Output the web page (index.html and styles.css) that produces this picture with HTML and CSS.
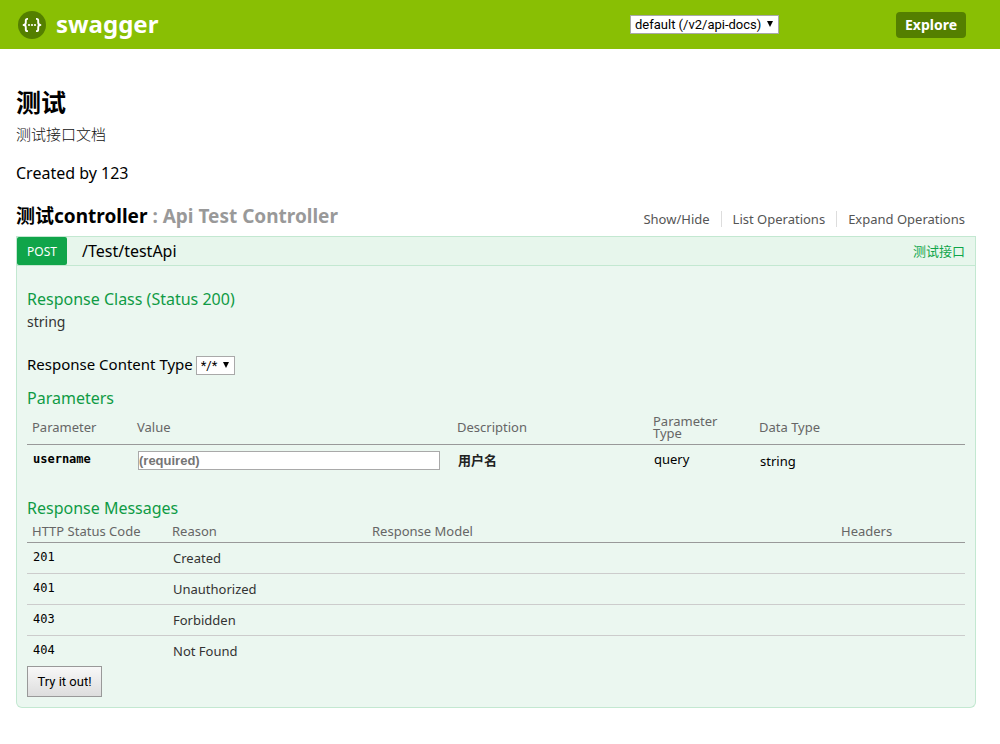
FILE: index.html
```html
<!DOCTYPE html>
<html lang="zh-CN">
<head>
<meta charset="utf-8">
<meta name="viewport" content="width=device-width, initial-scale=1">
<title>Swagger UI</title>
<link rel="stylesheet" href="styles.css">
</head>
<body>
<header class="topbar">
  <a class="logo" href="#">
    <svg class="logo-mark" viewBox="0 0 28 28" aria-hidden="true">
      <circle cx="14" cy="14" r="14" fill="#547f00"/>
      <g fill="none" stroke="#fff" stroke-width="1.9" stroke-linejoin="round">
        <path d="M10 7.9H9.4Q7.8 7.9 7.8 9.6v2Q7.8 14 5.6 14q2.2 0 2.2 2.4v2q0 1.7 1.6 1.7h.6"/>
        <path d="M18 7.9h.6q1.6 0 1.6 1.7v2q0 2.4 2.2 2.4-2.2 0-2.2 2.4v2q0 1.7-1.6 1.7h-.6"/>
      </g>
      <g fill="#fff"><circle cx="11" cy="14" r="1.1"/><circle cx="14" cy="14" r="1.1"/><circle cx="17" cy="14" r="1.1"/></g>
    </svg>
    <span class="logo-title">swagger</span>
  </a>
  <form class="api-selector">
    <span class="select api-select"><select aria-label="API"><option>default (/v2/api-docs)</option></select></span>
    <button class="explore" type="button">Explore</button>
  </form>
</header>

<main class="page">
  <h1 class="info-title">测试</h1>
  <p class="info-description">测试接口文档</p>
  <p class="info-author">Created by 123</p>

  <section class="resource">
    <div class="resource-head">
      <h2 class="resource-title"><a href="#">测试controller</a> : Api Test Controller</h2>
      <ul class="options">
        <li><a href="#">Show/Hide</a></li>
        <li><a href="#">List Operations</a></li>
        <li><a href="#">Expand Operations</a></li>
      </ul>
    </div>

    <article class="operation">
      <div class="operation-head">
        <a class="method" href="#">POST</a>
        <a class="path" href="#">/Test/testApi</a>
        <a class="summary" href="#">测试接口</a>
      </div>
      <form class="operation-body">
        <h4 class="section-title">Response Class (Status 200)</h4>
        <p class="model">string</p>

        <div class="content-type">
          <label for="content-type">Response Content Type</label>
          <span class="select type-select"><select id="content-type"><option>*/*</option></select></span>
        </div>

        <h4 class="section-title">Parameters</h4>
        <table class="grid params">
          <colgroup><col class="p-name"><col class="p-value"><col class="p-desc"><col class="p-type"><col></colgroup>
          <thead>
            <tr><th>Parameter</th><th>Value</th><th>Description</th><th>Parameter Type</th><th>Data Type</th></tr>
          </thead>
          <tbody>
            <tr>
              <td class="code required"><label for="username">username</label></td>
              <td class="field"><input id="username" class="value" type="text" placeholder="(required)"></td>
              <td class="description">用户名</td>
              <td class="kind">query</td>
              <td class="datatype">string</td>
            </tr>
          </tbody>
        </table>

        <h4 class="section-title">Response Messages</h4>
        <table class="grid messages">
          <colgroup><col class="m-code"><col class="m-reason"><col><col class="m-headers"></colgroup>
          <thead>
            <tr><th>HTTP Status Code</th><th>Reason</th><th>Response Model</th><th>Headers</th></tr>
          </thead>
          <tbody>
            <tr><td class="code">201</td><td>Created</td><td></td><td></td></tr>
            <tr><td class="code">401</td><td>Unauthorized</td><td></td><td></td></tr>
            <tr><td class="code">403</td><td>Forbidden</td><td></td><td></td></tr>
            <tr><td class="code">404</td><td>Not Found</td><td></td><td></td></tr>
          </tbody>
        </table>
        <button class="submit" type="button">Try it out!</button>
      </form>
    </article>
  </section>
</main>
</body>
</html>
```
FILE: styles.css
```css
* {
  box-sizing: border-box;
}

body {
  margin: 0;
  background: #fff;
  color: #000;
  font-family: "Noto Sans", "Noto Sans CJK SC", sans-serif;
  font-size: 14px;
}

h1, h2, h4, p, ul {
  margin: 0;
  padding: 0;
}

a {
  color: inherit;
  text-decoration: none;
}

/* Top bar */
.topbar {
  display: flex;
  align-items: center;
  justify-content: space-between;
  height: 49px;
  padding: 0 34px 0 18px;
  background: #89bf04;
}

.logo {
  display: flex;
  align-items: center;
  gap: 10px;
  color: #fff;
}

.logo-mark {
  width: 28px;
  height: 28px;
}

.logo-title {
  font-size: 24px;
  font-weight: 700;
  line-height: 26px;
  padding-bottom: 2px;
}

.api-selector {
  display: flex;
  align-items: center;
  gap: 117px;
}

.select {
  display: inline-block;
  position: relative;
}

.select::after {
  content: "";
  position: absolute;
  top: 6px;
  right: 6px;
  border: 3px solid transparent;
  border-top: 6px solid #000;
  border-bottom: 0;
  pointer-events: none;
}

.select select {
  display: block;
  appearance: none;
  width: 100%;
  height: 19px;
  margin: 0;
  padding: 0 4px;
  border: 1px solid #a9a9a9;
  border-radius: 0;
  background: #fff;
  color: #000;
  font: 13px Roboto, "Liberation Sans", sans-serif;
}

.api-select {
  width: 149px;
}

.type-select {
  width: 39px;
}

.explore {
  min-width: 70px;
  height: 26px;
  padding: 0 7px;
  border: 0;
  border-radius: 4px;
  background: #547f00;
  color: #fff;
  font: 700 14px "Noto Sans", sans-serif;
}

/* API info */
.page {
  padding: 37px 24px 36px 16px;
}

.info-title {
  font-size: 25px;
  line-height: 32px;
}

.info-description {
  margin-top: 6px;
  color: #111;
  font-size: 15px;
  font-weight: 300;
  line-height: 20px;
}

.info-author {
  margin-top: 19px;
  font-size: 16px;
  line-height: 20px;
}

/* Resource */
.resource {
  margin-top: 21px;
}

.resource-head {
  display: flex;
  justify-content: space-between;
  align-items: center;
  margin-bottom: 8px;
}

.resource-title {
  color: #999;
  font-size: 19px;
  line-height: 24px;
}

.resource-title a {
  color: #000;
}

.options {
  display: flex;
  padding-top: 6px;
  list-style: none;
  color: #555;
  font-size: 13px;
  line-height: 16px;
}

.options li {
  padding: 0 11px;
  border-left: 1px solid #ddd;
}

.options li:first-child {
  border-left: 0;
}

/* Operation */
.operation-head {
  display: flex;
  align-items: center;
  height: 30px;
  padding-right: 10px;
  border: 1px solid #c3e8d1;
  background: #e7f6ec;
}

.method {
  width: 50px;
  height: 28px;
  border-radius: 2px;
  background: #10a54a;
  color: #fff;
  font-size: 12px;
  line-height: 30px;
  text-align: center;
}

.path {
  flex: 1;
  padding-left: 15px;
  font-size: 16px;
}

.summary {
  padding-bottom: 2px;
  color: #10a54a;
  font-size: 13px;
}

.operation-body {
  padding: 21px 10px 10px;
  border: 1px solid #c3e8d1;
  border-top: 0;
  border-radius: 0 0 6px 6px;
  background: #ebf7f0;
}

.section-title {
  color: #0f9b45;
  font-size: 16px;
  font-weight: 400;
  line-height: 24px;
}

.model {
  margin-top: 1px;
  color: #333;
  line-height: 20px;
}

.content-type {
  display: flex;
  align-items: center;
  gap: 3px;
  height: 20px;
  margin: 23px 0 11px;
  font-size: 15px;
  line-height: 18px;
}

.content-type label {
  padding-bottom: 2px;
}

/* Tables */
.grid {
  width: 100%;
  border-collapse: separate;
  border-spacing: 0;
  table-layout: fixed;
  font-size: 13px;
}

.grid th {
  padding: 0 5px;
  border-bottom: 1px solid #999;
  color: #666;
  font-weight: 400;
  line-height: 12px;
  text-align: left;
}

.grid td {
  padding: 0 6px;
  vertical-align: top;
}

.grid .code {
  font-family: "DejaVu Sans Mono", monospace;
  font-size: 12px;
}

.p-name { width: 105px; }
.p-value { width: 320px; }
.p-desc { width: 196px; }
.p-type { width: 106px; }
.m-code { width: 140px; }
.m-reason { width: 200px; }
.m-headers { width: 129px; }

.params th {
  height: 35px;
}

.params td {
  height: 51px;
  padding-top: 5px;
  line-height: 18px;
}

.params .field {
  padding-top: 6px;
}

.params .required {
  font-weight: 700;
}

.params .description {
  padding-top: 6px;
  color: #222;
  font-weight: 600;
}

.params .datatype {
  padding-top: 7px;
}

.value {
  display: block;
  width: 302px;
  height: 19px;
  margin: 0;
  padding: 0;
  border: 1px solid #a9a9a9;
  background: #fff;
  font: 700 13px "Liberation Sans", sans-serif;
}

.value::placeholder {
  color: #757575;
  opacity: 1;
}

.messages th {
  height: 23px;
}

.messages td {
  height: 31px;
  padding-top: 6px;
  border-bottom: 1px solid #ccc;
  color: #333;
  line-height: 18px;
}

.messages tr:last-child td {
  height: 30px;
  border-bottom: 0;
}

.messages .code {
  padding-top: 5px;
  color: #000;
}

.submit {
  display: block;
  min-width: 75px;
  height: 31px;
  padding: 0 9px;
  border: 1px solid #999;
  background: linear-gradient(#f8f8f8, #ddd);
  color: #000;
  font: 13px Roboto, "Liberation Sans", sans-serif;
}
```
